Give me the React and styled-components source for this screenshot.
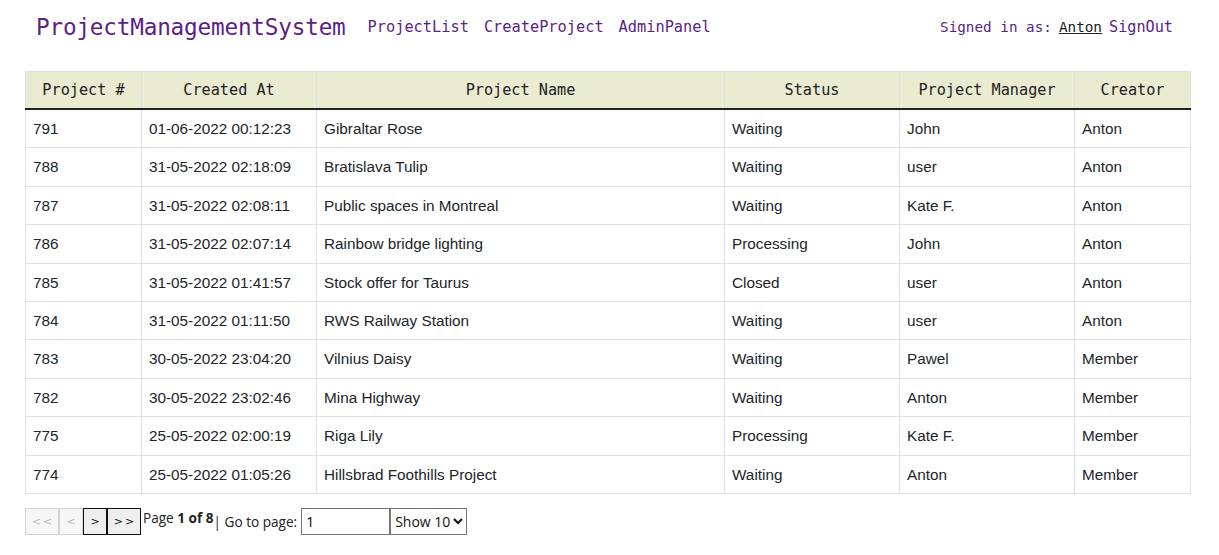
import styled, { createGlobalStyle } from 'styled-components';

const GlobalStyle = createGlobalStyle`
  body {
    margin: 0;
    background: #fff;
    font-family: "Liberation Sans", Arial, sans-serif;
    color: #212529;
  }
`;

const Page = styled.div`
  padding: 0 28px 0 25px;
`;

const NavBar = styled.nav`
  display: flex;
  align-items: center;
  height: 54px;
  padding: 0 18px 0 11px;
  font-family: "DejaVu Sans Mono", "Liberation Mono", monospace;
  color: #5b1f86;
`;

const Brand = styled.div`
  font-size: 22.7px;
  letter-spacing: -0.2px;
  margin-right: 22px;
`;

const NavLinks = styled.div`
  display: flex;
  gap: 15px;
  font-size: 15.3px;
`;

const NavLink = styled.a`
  color: inherit;
  text-decoration: none;
`;

const UserBox = styled.div`
  margin-left: auto;
  display: flex;
  align-items: baseline;
  gap: 7px;
`;

const Signed = styled.span`
  font-size: 14.3px;
`;

const UserName = styled.a`
  color: #222;
  font-size: 14.3px;
  text-decoration: underline;
`;

const SignOut = styled.a`
  font-size: 15.2px;
  color: inherit;
`;

const Table = styled.table`
  width: 1165px;
  border-collapse: collapse;
  table-layout: fixed;
  margin-top: 17px;
  border: 1px solid #dee2e6;
`;

const Th = styled.th`
  background: #e9ecd0;
  font-family: "DejaVu Sans Mono", "Liberation Mono", monospace;
  font-weight: normal;
  font-size: 15.2px;
  color: #222;
  text-align: center;
  padding: 8px;
  line-height: 20px;
  border: 1px solid #dee2e6;
  border-bottom: 2px solid #222;
`;

const Td = styled.td`
  font-size: 15.3px;
  padding: 8px 7px;
  line-height: 21.4px;
  border: 1px solid #dee2e6;
  white-space: nowrap;
`;

const Pager = styled.div`
  display: flex;
  align-items: flex-start;
  margin-top: 14px;
  font-family: "Open Sans", "Noto Sans", sans-serif;
  font-size: 13.6px;
  color: #222;
`;

const PageButton = styled.button`
  width: ${(p) => p.w}px;
  height: 27px;
  padding: 0;
  background: ${(p) => (p.disabled ? '#f7f7f7' : '#efefef')};
  border: 1px solid ${(p) => (p.disabled ? '#d4d4d4' : '#111')};
  color: ${(p) => (p.disabled ? '#bbb' : '#111')};
  font-family: "DejaVu Sans", sans-serif;
  font-size: 11px;
  letter-spacing: 2px;
  text-indent: 2px;
`;

const PageInfo = styled.span`
  line-height: 20px;
  margin-left: 2px;
  b {
    font-weight: 700;
  }
`;

const GoTo = styled.span`
  line-height: 20px;
  margin-top: 4px;
  margin-right: 4px;
`;

const PageInput = styled.input`
  width: 89px;
  height: 27px;
  box-sizing: border-box;
  border: 1px solid #767676;
  padding: 0 4px;
  font-family: "Open Sans", sans-serif;
  font-size: 14px;
`;

const Select = styled.select`
  width: 77px;
  height: 27px;
  border: 1px solid #767676;
  border-radius: 0;
  background: #fff;
  font-family: "Open Sans", sans-serif;
  font-size: 14px;
  color: #111;
`;

const columns = [
  ['Project #', 116],
  ['Created At', 175],
  ['Project Name', 408],
  ['Status', 175],
  ['Project Manager', 175],
  ['Creator', 116],
];

const rows = [
  ['791', '01-06-2022 00:12:23', 'Gibraltar Rose', 'Waiting', 'John', 'Anton'],
  ['788', '31-05-2022 02:18:09', 'Bratislava Tulip', 'Waiting', 'user', 'Anton'],
  ['787', '31-05-2022 02:08:11', 'Public spaces in Montreal', 'Waiting', 'Kate F.', 'Anton'],
  ['786', '31-05-2022 02:07:14', 'Rainbow bridge lighting', 'Processing', 'John', 'Anton'],
  ['785', '31-05-2022 01:41:57', 'Stock offer for Taurus', 'Closed', 'user', 'Anton'],
  ['784', '31-05-2022 01:11:50', 'RWS Railway Station', 'Waiting', 'user', 'Anton'],
  ['783', '30-05-2022 23:04:20', 'Vilnius Daisy', 'Waiting', 'Pawel', 'Member'],
  ['782', '30-05-2022 23:02:46', 'Mina Highway', 'Waiting', 'Anton', 'Member'],
  ['775', '25-05-2022 02:00:19', 'Riga Lily', 'Processing', 'Kate F.', 'Member'],
  ['774', '25-05-2022 01:05:26', 'Hillsbrad Foothills Project', 'Waiting', 'Anton', 'Member'],
];

export default function App() {
  return (
    <Page>
      <GlobalStyle />
      <NavBar>
        <Brand>ProjectManagementSystem</Brand>
        <NavLinks>
          <NavLink>ProjectList</NavLink>
          <NavLink>CreateProject</NavLink>
          <NavLink>AdminPanel</NavLink>
        </NavLinks>
        <UserBox>
          <Signed>Signed in as:</Signed>
          <UserName>Anton</UserName>
          <SignOut>SignOut</SignOut>
        </UserBox>
      </NavBar>

      <Table>
        <colgroup>
          {columns.map(([name, w]) => (
            <col key={name} style={{ width: w }} />
          ))}
        </colgroup>
        <thead>
          <tr>
            {columns.map(([name]) => (
              <Th key={name}>{name}</Th>
            ))}
          </tr>
        </thead>
        <tbody>
          {rows.map((r) => (
            <tr key={r[0]}>
              {r.map((c, i) => (
                <Td key={i}>{c}</Td>
              ))}
            </tr>
          ))}
        </tbody>
      </Table>

      <Pager>
        <PageButton w={34} disabled>{'<<'}</PageButton>
        <PageButton w={24} disabled>{'<'}</PageButton>
        <PageButton w={24}>{'>'}</PageButton>
        <PageButton w={34}>{'>>'}</PageButton>
        <PageInfo>
          Page <b>1 of 8</b>
        </PageInfo>
        <GoTo>| Go to page:</GoTo>
        <PageInput defaultValue="1" />
        <Select defaultValue="10">
          <option value="10">Show 10</option>
          <option value="20">Show 20</option>
        </Select>
      </Pager>
    </Page>
  );
}
